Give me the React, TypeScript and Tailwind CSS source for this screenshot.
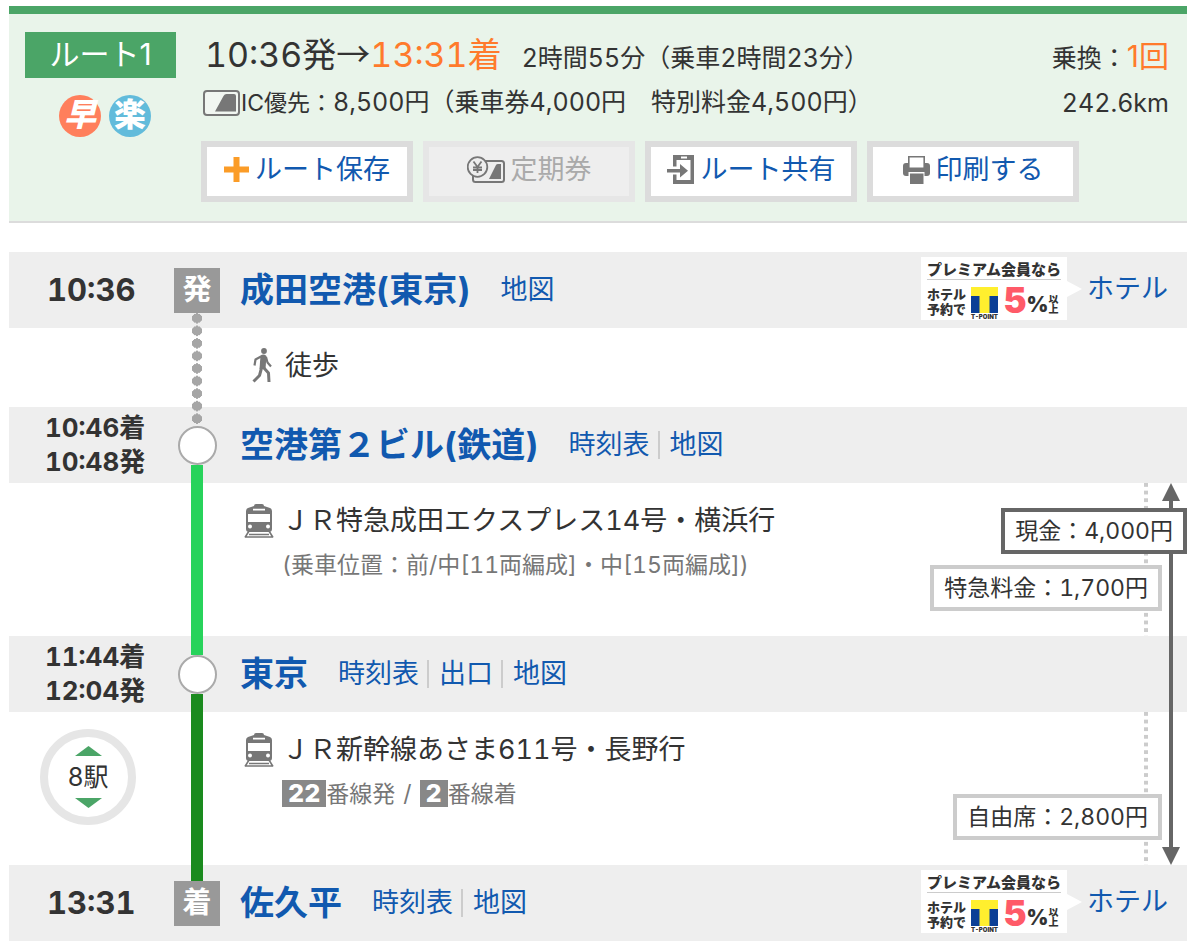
import type { ReactNode } from 'react'
import clsx from 'clsx'

type Station = {
    name: string
    times: string[]
    links: string[]
    mark?: string
    hotel?: boolean
}

const narita: Station = { name: '成田空港(東京)', times: ['10:36'], links: ['地図'], mark: '発', hotel: true }
const terminal2: Station = { name: '空港第２ビル(鉄道)', times: ['10:46着', '10:48発'], links: ['時刻表', '地図'] }
const tokyo: Station = { name: '東京', times: ['11:44着', '12:04発'], links: ['時刻表', '出口', '地図'] }
const sakudaira: Station = { name: '佐久平', times: ['13:31'], links: ['時刻表', '地図'], mark: '着', hotel: true }

const IcCardIcon = () => (
    <svg width="37" height="26" viewBox="0 0 37 26" className="shrink-0" aria-hidden="true">
        <rect x="1" y="1" width="35" height="24" rx="3" fill="#f1f6f1" stroke="#777" strokeWidth="2" />
        <path d="M12 21.500 20.500 6Q21.500 4 23.500 4H31Q33 4 33 6V21.500Z" fill="#777" />
    </svg>
)

const PlusIcon = () => (
    <svg width="25" height="25" viewBox="0 0 25 25" aria-hidden="true">
        <path d="M9.500 0h6v9.500h9.500v6h-9.500V25h-6v-9.500H0v-6h9.500Z" fill="#fb9c27" />
    </svg>
)

const PassIcon = () => (
    <svg width="38" height="28" viewBox="0 0 38 28" fill="none" stroke="#777" aria-hidden="true">
        <rect x="6" y="5" width="31" height="21" rx="2.500" strokeWidth="2" />
        <path d="M22 23 29 9Q29.500 8 31 8H34V23Z" fill="#777" stroke="none" />
        <circle cx="10.500" cy="11" r="9.800" fill="#eee" strokeWidth="1.800" />
        <path d="M6.500 5.500 10.500 11l4-5.500M10.500 11v6M6 11.500h9M6 14h9" strokeWidth="1.800" />
    </svg>
)

const ShareIcon = () => (
    <svg width="28" height="30" viewBox="0 0 28 30" fill="#777" aria-hidden="true">
        <path d="M6 0H27V29H6V19.500H9.500V25H23.500V5H9.500V11.500H6Z" />
        <path d="M14 1.500h6v2h-6z" fill="#fff" />
        <path d="M0 14h13V9l8 6.700-8 6.700v-5H0Z" />
    </svg>
)

const PrinterIcon = () => (
    <svg width="27" height="28" viewBox="0 0 27 28" aria-hidden="true">
        <path d="M3 7H24Q27 7 27 10V17Q27 20 24 20H3Q0 20 0 17V10Q0 7 3 7Z" fill="#777" />
        <path d="M5.800.800H21.200V12.200H5.800Z" fill="#fff" stroke="#777" strokeWidth="1.600" />
        <path d="M5.500 16H21.500V28H5.500Z" fill="#fff" />
        <path d="M7 17.500H20.500V28H7Z" fill="#777" />
    </svg>
)

const WalkIcon = () => (
    <svg width="20" height="35" viewBox="0 0 20 35" fill="none" stroke="#777" strokeLinejoin="round" aria-hidden="true">
        <circle cx="12" cy="3" r="2.900" fill="#777" stroke="none" />
        <path d="M8.500 7.500Q11.500 5.500 14.500 8L13.500 21H7.500Z" fill="#777" stroke="none" />
        <path d="M9 8.500 3.500 11.500 2.500 17.500" strokeWidth="2.200" />
        <path d="M14 9 15.500 14.500 19 18.500" strokeWidth="2.200" />
        <path d="M9.500 20 7.500 27.500 1.500 33.500" strokeWidth="3" />
        <path d="M11.500 19.500 16.500 25 17 34" strokeWidth="3" />
    </svg>
)

const TrainIcon = () => (
    <svg width="30" height="34" viewBox="0 0 30 34" aria-hidden="true">
        <path d="M10 2Q10 0 12 0H18Q20 0 20 2L26 4Q28 5 28 7V25Q28 28 25 28H5Q2 28 2 25V7Q2 5 4 4Z" fill="#777" />
        <path d="M9 4.800h12v1.800H9zM4 10h22v8H4z" fill="#fff" />
        <circle cx="6" cy="22.500" r="2" fill="#fff" />
        <circle cx="24" cy="22.500" r="2" fill="#fff" />
        <path d="M5 27 1 33.500M25 27l4 6.500M5 30.500h20M2 33h26" stroke="#777" strokeWidth="1.600" />
    </svg>
)

const TPointLogo = () => (
    <svg width="27" height="26" viewBox="0 0 27 26" aria-hidden="true">
        <path d="M0 0h27v26H0z" fill="#ffef2e" />
        <path d="M0 9h8.500v17H0zM18.500 9H27v17h-8.500z" fill="#0b3f96" />
    </svg>
)

const ActionButton = ({ icon, label, disabled }: { icon: ReactNode; label: string; disabled?: boolean }) => (
    <button
        type="button"
        disabled={disabled}
        className={clsx(
            'flex h-[61px] w-[212px] items-center justify-center gap-[6px] border-[6px] pb-1 text-[27px] leading-8',
            disabled ? 'border-[#e6e6e6] bg-[#eee] text-[#aaa]' : 'border-[#dcdcdc] bg-white text-[#1159af]'
        )}
    >
        {icon}
        <span>{label}</span>
    </button>
)

function HotelBanner() {
    return (
        <a href="#hotel" className="flex shrink-0 items-center pr-[19px] pb-[3px] text-[27px] leading-8 text-[#1159af]">
            <span className="block h-[63px] w-[146px] bg-white px-[6px] pt-[3px] font-black text-[#333]">
                <span className="block border-b border-[#ccc] text-[15px] leading-[19px] whitespace-nowrap">プレミアム会員なら</span>
                <span className="flex items-start pt-[7px]">
                    <span className="w-[44px] text-[13px] leading-[15px]">
                        ホテル
                        <br />
                        予約で
                    </span>
                    <span className="flex flex-col items-center">
                        <TPointLogo />
                        <span className="text-[6px] leading-[7px]">T-POINT</span>
                    </span>
                    <span className="pl-[6px] text-[35px] leading-[27px] text-[#ff5a68]">5</span>
                    <span className="pt-1 text-[21px] leading-[27px]">%</span>
                    <span className="pt-[7px] text-[10px] leading-[10px]">
                        以
                        <br />
                        上
                    </span>
                </span>
            </span>
            <svg width="15" height="16" viewBox="0 0 15 16" aria-hidden="true">
                <path d="M0 0 15 8 0 16Z" fill="#fff" />
            </svg>
            <span className="pl-[5px]">ホテル</span>
        </a>
    )
}

// above / below: the colour of the line that enters and leaves the station
function StationRow({ station, above, below }: { station: Station; above?: string; below?: string }) {
    const { name, times, links, mark, hotel } = station
    return (
        <div className="grid min-h-[76px] grid-cols-[165px_46px_1fr] bg-[#eee]">
            <div
                className={clsx(
                    'flex flex-col justify-center font-bold',
                    times.length > 1 ? 'pl-9 text-[26px] leading-[34px]' : 'pl-[38px] text-[31px] leading-9'
                )}
            >
                {times.map((time) => (
                    <time key={time}>{time}</time>
                ))}
            </div>
            <div className="flex flex-col items-center">
                <div className={clsx('w-3 flex-1', above)} />
                {mark ? (
                    <span className="flex h-[45px] w-[46px] items-center justify-center bg-[#999] text-[29px] leading-8 font-bold text-white">{mark}</span>
                ) : (
                    <span className="size-[39px] rounded-full border-2 border-[#aaa] bg-white" />
                )}
                <div className={clsx('w-3 flex-1', below)} />
            </div>
            <div className="flex items-center justify-between pl-5">
                <div className="flex items-center gap-[30px]">
                    <h2 className="text-[34px] leading-10 font-bold text-[#1159af]">
                        <a href="#station">{name}</a>
                    </h2>
                    <ul className="flex items-center text-[27px] leading-7 text-[#1159af]">
                        {links.map((link, i) => (
                            <li key={link} className={clsx(i > 0 && 'ml-2 border-l-2 border-[#ccc] pl-[10px]')}>
                                <a href="#link">{link}</a>
                            </li>
                        ))}
                    </ul>
                </div>
                {hotel && <HotelBanner />}
            </div>
        </div>
    )
}

type LegProps = {
    line: string
    title: string
    detail: ReactNode
    fares: ReactNode
    stops?: ReactNode
}

function TrainLeg({ line, title, detail, fares, stops }: LegProps) {
    return (
        <div className="relative grid min-h-[153px] grid-cols-[165px_46px_1fr_auto]">
            <div className="pt-[17px] pl-[31px]">{stops}</div>
            <div className={clsx('w-3 justify-self-center', line)} />
            <div className="pt-5 pl-6">
                <p className="flex items-center gap-2 text-[27px] leading-9">
                    <TrainIcon />
                    {title}
                </p>
                <p className="pt-2 pl-[38px] text-[23px] leading-9 text-[#777]">{detail}</p>
            </div>
            <div className="absolute inset-y-0 right-[39px] w-1 bg-[linear-gradient(#ccc_50%,transparent_50%)] bg-[length:4px_5%]" />
            <div className="relative z-10 flex flex-col items-end justify-end gap-[11px] pb-[25px]">{fares}</div>
        </div>
    )
}

const Fare = ({ children, strong }: { children: ReactNode; strong?: boolean }) => (
    <span
        className={clsx(
            'border-4 bg-white px-[10px] text-[23px] leading-[38px] whitespace-nowrap',
            strong ? 'border-[#666]' : 'mr-[25px] border-[#ccc]'
        )}
    >
        {children}
    </span>
)

const Platform = ({ children }: { children: ReactNode }) => (
    <b className="inline-block bg-[#888] px-[6px] text-[25px] leading-[27px] font-extrabold text-white">{children}</b>
)

function App() {
    return (
        <main className="bg-white pt-[6px] pr-[13px] pb-[6px] pl-[9px] font-['Inter','Noto_Sans_CJK_JP',sans-serif] text-[#333] tabular-nums">
            <header className="flex border-t-8 border-b-2 border-t-[#4ba567] border-b-[#dcdcdc] bg-[#e9f4ea] pt-[18px] pb-[19px]">
                <div className="flex w-48 shrink-0 flex-col pl-4">
                    <h1 className="h-[46px] w-[151px] bg-[#4ba567] text-center text-[30px] leading-[44px] text-white proportional-nums">ルート1</h1>
                    <div className="flex gap-2 pt-[17px] pl-[34px] text-[32px] leading-[40px] font-black text-white">
                        <span className="size-[42px] rounded-full bg-[#ff7f5c] text-center italic">早</span>
                        <span className="size-[42px] rounded-full bg-[#62bbdb] text-center">楽</span>
                    </div>
                </div>
                <div className="min-w-0 flex-1">
                    <div className="flex items-baseline justify-between pr-[18px] pl-1">
                        <p className="text-[25px] leading-[42px]">
                            <span className="text-[34px]">
                                10:36発<span className="font-['Noto_Sans_CJK_JP',sans-serif]">→</span>
                                <span className="text-[#ff7a2c]">13:31着</span>
                            </span>
                            <span className="pl-5">2時間55分（乗車2時間23分）</span>
                        </p>
                        <p className="text-[25px] leading-[42px]">
                            乗換：<span className="text-[30px] text-[#ff7a2c] proportional-nums">1回</span>
                        </p>
                    </div>
                    <div className="flex items-center justify-between pt-[5px] pr-[18px] pl-[2px] text-[25px] leading-9">
                        <p className="flex items-center gap-[1px]">
                            <IcCardIcon />
                            <span>
                                <span className="text-[23px]">IC優先：</span>
                                8,500円（乗車券4,000円　特別料金4,500円）
                            </span>
                        </p>
                        <p>242.6km</p>
                    </div>
                    <div className="flex gap-[10px] pt-5">
                        <ActionButton icon={<PlusIcon />} label="ルート保存" />
                        <ActionButton icon={<PassIcon />} label="定期券" disabled />
                        <ActionButton icon={<ShareIcon />} label="ルート共有" />
                        <ActionButton icon={<PrinterIcon />} label="印刷する" />
                    </div>
                </div>
            </header>

            <div className="pt-[29px]">
                <StationRow station={narita} />
                <div className="relative grid min-h-[79px] grid-cols-[165px_46px_1fr]">
                    {/* walking part, runs from the departure mark to the next circle */}
                    <div className="absolute -top-4 -bottom-[18px] left-[183px] w-[10px] bg-[radial-gradient(circle_at_center,#a6a6a6_5px,transparent_5px)] bg-[length:10px_13px] bg-repeat-round" />
                    <p className="col-start-3 flex items-center gap-[13px] pb-1 pl-8 text-[27px] leading-9">
                        <WalkIcon />
                        徒歩
                    </p>
                </div>
                <StationRow station={terminal2} below="bg-[#27d35b]" />
                <div className="relative">
                    <TrainLeg
                        line="bg-[#27d35b]"
                        title="ＪＲ特急成田エクスプレス14号・横浜行"
                        detail="(乗車位置：前/中[11両編成]・中[15両編成])"
                        fares={
                            <>
                                <Fare strong>現金：4,000円</Fare>
                                <Fare>特急料金：1,700円</Fare>
                            </>
                        }
                    />
                    <StationRow station={tokyo} above="bg-[#27d35b]" below="bg-[#1a8a1e]" />
                    <TrainLeg
                        line="bg-[#1a8a1e]"
                        title="ＪＲ新幹線あさま611号・長野行"
                        detail={
                            <>
                                <Platform>22</Platform>番線発<span className="px-2">/</span>
                                <Platform>2</Platform>番線着
                            </>
                        }
                        fares={<Fare>自由席：2,800円</Fare>}
                        stops={
                            <button type="button" className="flex size-24 flex-col items-center justify-center rounded-full border-8 border-[#e6e6e6] text-[25px] leading-[42px]">
                                <svg width="27" height="10" viewBox="0 0 27 10" aria-hidden="true">
                                    <path d="M0 10 13.500 0 27 10Z" fill="#4ba567" />
                                </svg>
                                8駅
                                <svg width="27" height="10" viewBox="0 0 27 10" aria-hidden="true">
                                    <path d="M0 0 13.500 10 27 0Z" fill="#4ba567" />
                                </svg>
                            </button>
                        }
                    />
                    <div className="absolute inset-y-0 right-[7px] flex w-[18px] flex-col items-center">
                        <svg width="18" height="18" viewBox="0 0 18 18" aria-hidden="true">
                            <path d="M9 0 18 18H0Z" fill="#666" />
                        </svg>
                        <div className="w-1 flex-1 bg-[#666]" />
                        <svg width="18" height="18" viewBox="0 0 18 18" aria-hidden="true">
                            <path d="M9 18 18 0H0Z" fill="#666" />
                        </svg>
                    </div>
                </div>
                <StationRow station={sakudaira} above="bg-[#1a8a1e]" />
            </div>
        </main>
    )
}

export default App
